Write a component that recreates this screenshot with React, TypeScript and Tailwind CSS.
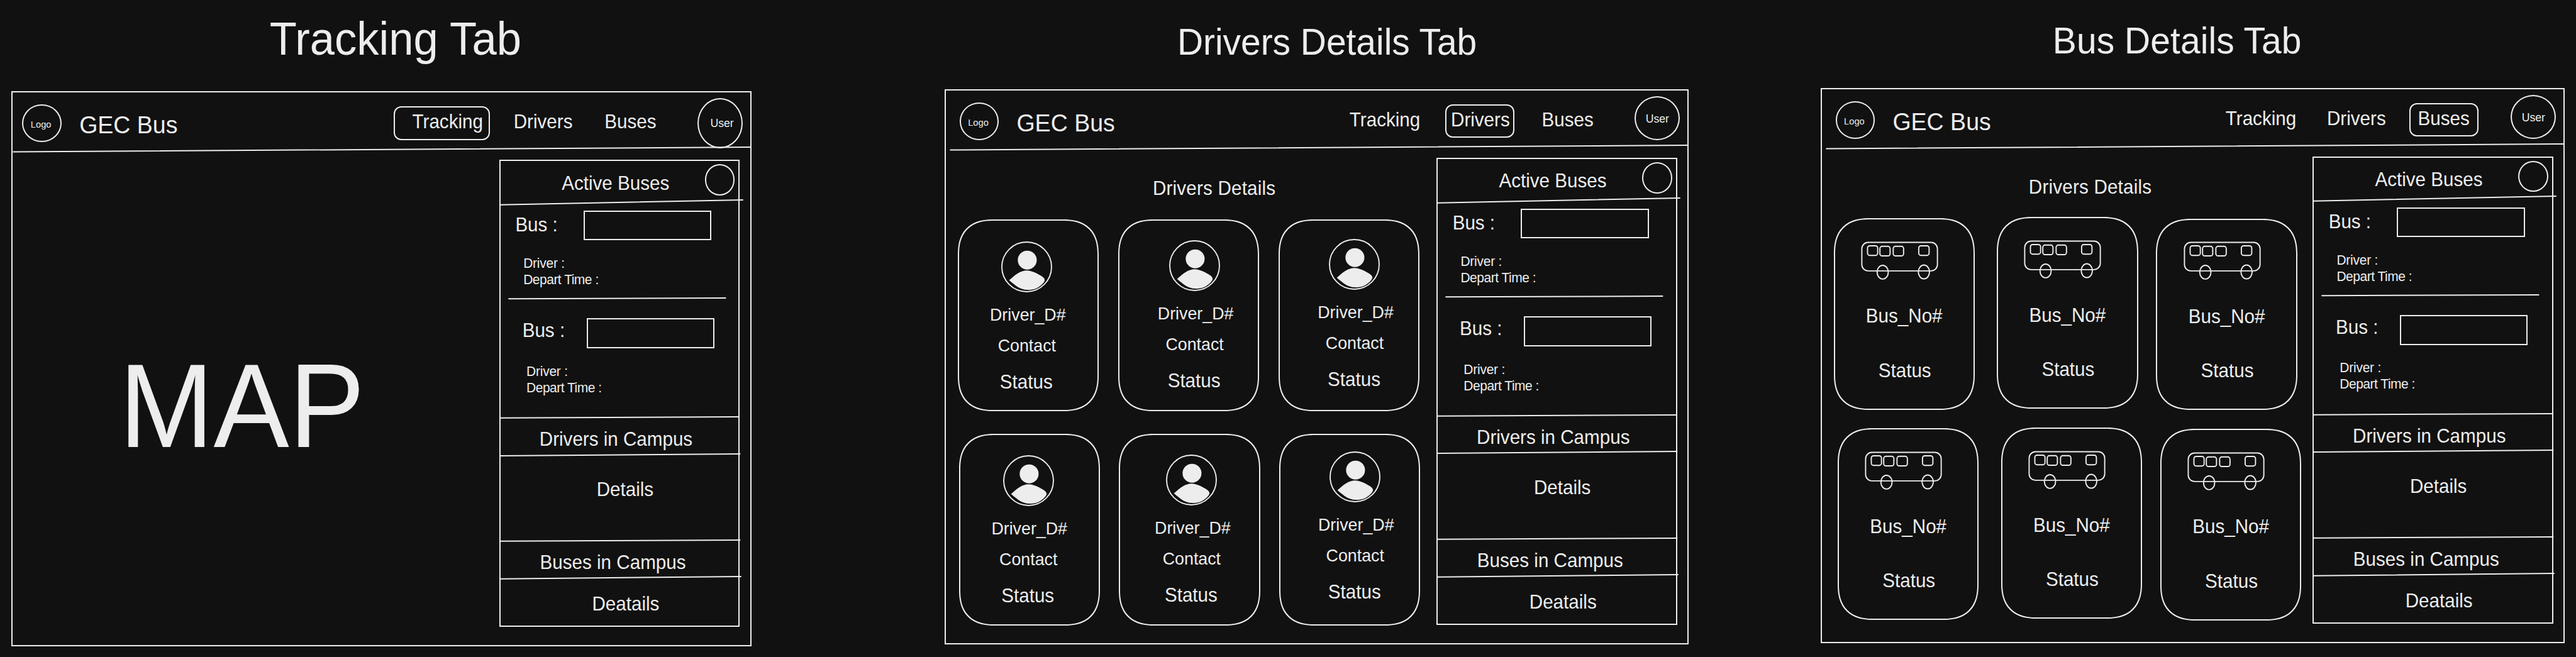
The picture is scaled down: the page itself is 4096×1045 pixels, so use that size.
import type { ReactNode } from "react";

type TabName = "tracking" | "drivers" | "buses";

const INK = "#ededed";

/* Text drawn slightly taller than the font's own proportions, anchored on its baseline. */
function Tall({ className = "", children }: { className?: string; children: ReactNode }) {
  return (
    <span className={`inline-block origin-[50%_84.65%] scale-y-[1.045] whitespace-nowrap leading-none ${className}`}>
      {children}
    </span>
  );
}

/* A hand-drawn rule that drifts upward from left to right. */
function Slant({ className, x1, x2, rise }: { className: string; x1: number; x2: number; rise: number }) {
  return (
    <svg className={`block w-full shrink-0 overflow-visible ${className}`}>
      <line x1={x1} y1={rise} x2={x2} y2={0} stroke={INK} strokeWidth={2} strokeLinecap="round" />
    </svg>
  );
}

function NavPill({ className, active, children }: { className: string; active: boolean; children: ReactNode }) {
  return (
    <div
      className={`shrink-0 rounded-[12px] border-2 pt-[7.6px] text-[29.6px] leading-none ${
        active ? "border-[#ededed]" : "border-transparent"
      } ${className}`}
    >
      <Tall>{children}</Tall>
    </div>
  );
}

function Header({ tab }: { tab: TabName }) {
  return (
    <header className="flex h-[86.6px] shrink-0 items-start">
      <div className="ml-[21.8px] mt-[19.1px] flex h-[59.6px] w-[62.6px] shrink-0 items-center justify-center rounded-[50%] border-2 border-[#ededed] pr-[3px] pt-[5px] text-[14.7px] leading-none">
        <Tall>Logo</Tall>
      </div>
      <div className="ml-[28.2px] mt-[33.4px] w-[499.9px] shrink-0 text-[37.5px] leading-none">
        <Tall>GEC Bus</Tall>
      </div>
      <nav className="mt-[21.9px] flex w-[483px] shrink-0">
        <NavPill className="h-[54px] w-[153.2px] pl-[27.5px]" active={tab === "tracking"}>
          Tracking
        </NavPill>
        <NavPill className="ml-[28.7px] h-[53px] w-[109.5px] pl-[6.8px]" active={tab === "drivers"}>
          Drivers
        </NavPill>
        <NavPill className="ml-[30.2px] h-[53px] w-[109.9px] pl-[11.6px]" active={tab === "buses"}>
          Buses
        </NavPill>
      </nav>
      <div
        className={`mt-[8.5px] flex w-[72px] shrink-0 items-center justify-center rounded-[50%] border-2 border-[#ededed] text-[17.7px] leading-none ${
          tab === "tracking" ? "h-[80px] pl-[6px] pt-[2px]" : "h-[70px] pt-[4px]"
        }`}
      >
        <Tall>User</Tall>
      </div>
    </header>
  );
}

function TripInfo({ className }: { className: string }) {
  return (
    <div className={`shrink-0 text-[21px] leading-[26px] ${className}`}>
      <p>
        <Tall className="tracking-[-0.25px]">Driver :</Tall>
      </p>
      <p>
        <Tall className="tracking-[-0.5px]">Depart Time :</Tall>
      </p>
    </div>
  );
}

function SidePanel() {
  return (
    <aside className="mt-[12px] flex h-[743.4px] w-[382.3px] shrink-0 flex-col border-2 border-[#ededed] text-[29.6px] leading-none">
      <div className="flex h-[61.7px] shrink-0 items-start justify-between pl-[97.2px] pr-[6px]">
        <h3 className="mt-[20.6px]">
          <Tall>Active Buses</Tall>
        </h3>
        <span className="mt-[5.4px] h-[49.3px] w-[47.7px] rounded-[50%] border-2 border-[#ededed]" />
      </div>
      <Slant className="h-[7.7px]" x1={0} x2={385} rise={7.7} />

      <div className="mt-[9.6px] flex shrink-0 pl-[23.4px]">
        <span className="w-[108.8px] pt-[8px]">
          <Tall>Bus :</Tall>
        </span>
        <span className="h-[47.4px] w-[203.3px] border-2 border-[#ededed]" />
      </div>
      <TripInfo className="mt-[24px] pl-[36.2px]" />
      <Slant className="mt-[15.4px] h-[1.3px]" x1={13.1} x2={357.6} rise={1.3} />

      <div className="mt-[31px] flex shrink-0 pl-[34.7px]">
        <span className="w-[102px] pt-[5.3px]">
          <Tall>Bus :</Tall>
        </span>
        <span className="h-[47.8px] w-[203.3px] border-2 border-[#ededed]" />
      </div>
      <TripInfo className="mt-[23.8px] pl-[41.1px]" />

      <Slant className="mt-[33.7px] h-[1.7px]" x1={0} x2={379} rise={1.7} />
      <h3 className="h-[56.5px] shrink-0 pl-[61.8px] pt-[19.3px]">
        <Tall>Drivers in Campus</Tall>
      </h3>
      <Slant className="h-[3.1px]" x1={0} x2={380.5} rise={3.1} />
      <p className="h-[134.8px] shrink-0 pl-[152.7px] pt-[39.9px]">
        <Tall>Details</Tall>
      </p>
      <Slant className="h-[1.7px]" x1={0} x2={380.5} rise={1.7} />
      <h3 className="h-[56.2px] shrink-0 pl-[62.6px] pt-[19px]">
        <Tall>Buses in Campus</Tall>
      </h3>
      <Slant className="h-[3.7px]" x1={0} x2={382} rise={3.7} />
      <p className="shrink-0 pl-[145.5px] pt-[25.5px]">
        <Tall>Deatails</Tall>
      </p>
    </aside>
  );
}

function PersonIcon() {
  return (
    <svg className="h-[81px] w-[81px] shrink-0" viewBox="-1.6 -1.6 127.8 127.8" fill="none">
      <ellipse cx="62.3" cy="62.3" rx="62.3" ry="62.3" stroke={INK} strokeWidth="3" />
      <circle cx="63.7" cy="45.3" r="23.7" fill={INK} />
      <path
        d="M18.3 96 C33 82 47 71.3 62.7 71.3 C75 71.3 92 80 101 86.5 C108 91.5 109.5 96 104.4 102 C94 114.5 82 120 64.4 120 C46 120 35 110 18.3 96Z"
        fill={INK}
      />
    </svg>
  );
}

function BusIcon() {
  return (
    <svg className="h-[62.1px] w-[123px] shrink-0" viewBox="68 58 194 98" fill="none" stroke={INK} strokeWidth="3">
      <rect x="70.2" y="60.4" width="189.7" height="71.6" rx="16" />
      <rect x="84.5" y="69" width="25.5" height="24" rx="5.5" />
      <rect x="115.6" y="70.3" width="25.5" height="24" rx="5.5" />
      <rect x="149" y="70.3" width="26" height="24" rx="5.5" />
      <rect x="213" y="69" width="26" height="24" rx="5.5" />
      <ellipse cx="122.6" cy="135.2" rx="14" ry="17.3" />
      <ellipse cx="226" cy="134.6" rx="14" ry="17.3" />
    </svg>
  );
}

function DriverCard({ offset }: { offset: string }) {
  return (
    <article className="h-[305.1px] w-[224.3px] shrink-0 rounded-[51px] border-2 border-[#ededed] supports-[corner-shape:squircle]:rounded-[56px] supports-[corner-shape:squircle]:[corner-shape:superellipse(1.27)]">
      <div className={`flex w-[220.3px] flex-col items-center leading-none ${offset}`}>
        <PersonIcon />
        <Tall className="mt-[23.4px] ml-[3px] text-[26.8px]">Driver_D#</Tall>
        <Tall className="mt-[21.8px] text-[26.8px]">Contact</Tall>
        <Tall className="mt-[29.6px] mr-[2px] text-[29.6px]">Status</Tall>
      </div>
    </article>
  );
}

function BusCard({ offset }: { offset: string }) {
  return (
    <article
      className={`flex h-[304.5px] w-[224.3px] shrink-0 flex-col items-center rounded-[51px] border-2 border-[#ededed] pt-[34.8px] text-[29.6px] leading-none supports-[corner-shape:squircle]:rounded-[56px] supports-[corner-shape:squircle]:[corner-shape:superellipse(1.27)] ${offset}`}
    >
      <div className="flex w-full pl-[41.1px]">
        <BusIcon />
      </div>
      <Tall className="mt-[42.4px]">Bus_No#</Tall>
      <Tall className="mt-[56.6px] ml-[2px]">Status</Tall>
    </article>
  );
}

function ViewHeading({ children }: { children: ReactNode }) {
  return (
    <h2 className="pl-[329px] pt-[46.3px] text-[29.6px] leading-none">
      <Tall className="tracking-[0.2px]">{children}</Tall>
    </h2>
  );
}

function DriversView() {
  return (
    <section className="w-[780.4px] shrink-0">
      <ViewHeading>Drivers Details</ViewHeading>
      <div className="mt-[34px] flex gap-[30.4px] pl-[19.3px]">
        <DriverCard offset="-ml-[2.5px] mt-[33.3px]" />
        <DriverCard offset="ml-[9.6px] mt-[31.3px]" />
        <DriverCard offset="ml-[9.3px] mt-[29.3px]" />
      </div>
      <div className="mt-[36.4px] flex gap-[30.4px] pl-[20.7px]">
        <DriverCard offset="-ml-[1.5px] mt-[31.6px]" />
        <DriverCard offset="ml-[3.5px] mt-[30.3px]" />
        <DriverCard offset="ml-[8.7px] mt-[25.8px]" />
      </div>
    </section>
  );
}

function BusesView() {
  return (
    <section className="w-[780.4px] shrink-0">
      <ViewHeading>Drivers Details</ViewHeading>
      <div className="mt-[34px] flex h-[304.5px] pl-[18.7px]">
        <BusCard offset="mt-[0.4px]" />
        <BusCard offset="ml-[35.4px] -mt-[1.3px]" />
        <BusCard offset="ml-[28.9px] mt-[1px]" />
      </div>
      <div className="mt-[29.9px] flex h-[304.5px] pl-[25.2px]">
        <BusCard offset="mt-[0.4px]" />
        <BusCard offset="ml-[35.4px] -mt-[1.3px]" />
        <BusCard offset="ml-[28.9px] mt-[1px]" />
      </div>
    </section>
  );
}

function MapView() {
  return (
    <section className="w-[780.4px] shrink-0">
      <p className="pl-[175.8px] pt-[317px] text-[180.3px] leading-none">
        <Tall>MAP</Tall>
      </p>
    </section>
  );
}

function Frame({ tab, className }: { tab: TabName; className: string }) {
  return (
    <div className={`flex h-[882.4px] shrink-0 justify-end border-2 border-[#ededed] ${className}`}>
      <div className="flex w-[1179.6px] shrink-0 flex-col">
        <Header tab={tab} />
        <Slant className="h-[8px]" x1={7.2} x2={1180} rise={7.5} />
        <div className="flex">
          {tab === "tracking" && <MapView />}
          {tab === "drivers" && <DriversView />}
          {tab === "buses" && <BusesView />}
          <SidePanel />
        </div>
      </div>
    </div>
  );
}

export default function App() {
  return (
    <main className="flex h-[1045px] w-[4096px] items-start overflow-hidden bg-[#111111] font-['Liberation_Sans',Arial,sans-serif] text-[#ededed]">
      <div className="ml-[17.7px] shrink-0">
        <h1 className="h-[145.4px] pl-[411px] pt-[28px] text-[70.6px] leading-none">
          <Tall>Tracking Tab</Tall>
        </h1>
        <Frame tab="tracking" className="w-[1177.5px]" />
      </div>
      <div className="ml-[306.7px] shrink-0">
        <h1 className="h-[142.3px] pl-[370px] pt-[39px] text-[56.9px] leading-none">
          <Tall>Drivers Details Tab</Tall>
        </h1>
        <Frame tab="drivers" className="w-[1183.6px]" />
      </div>
      <div className="ml-[209.4px] shrink-0">
        <h1 className="h-[140.2px] pl-[369px] pt-[37.3px] text-[56.9px] leading-none">
          <Tall className="tracking-[0.1px]">Bus Details Tab</Tall>
        </h1>
        <Frame tab="buses" className="w-[1183.6px]" />
      </div>
    </main>
  );
}
